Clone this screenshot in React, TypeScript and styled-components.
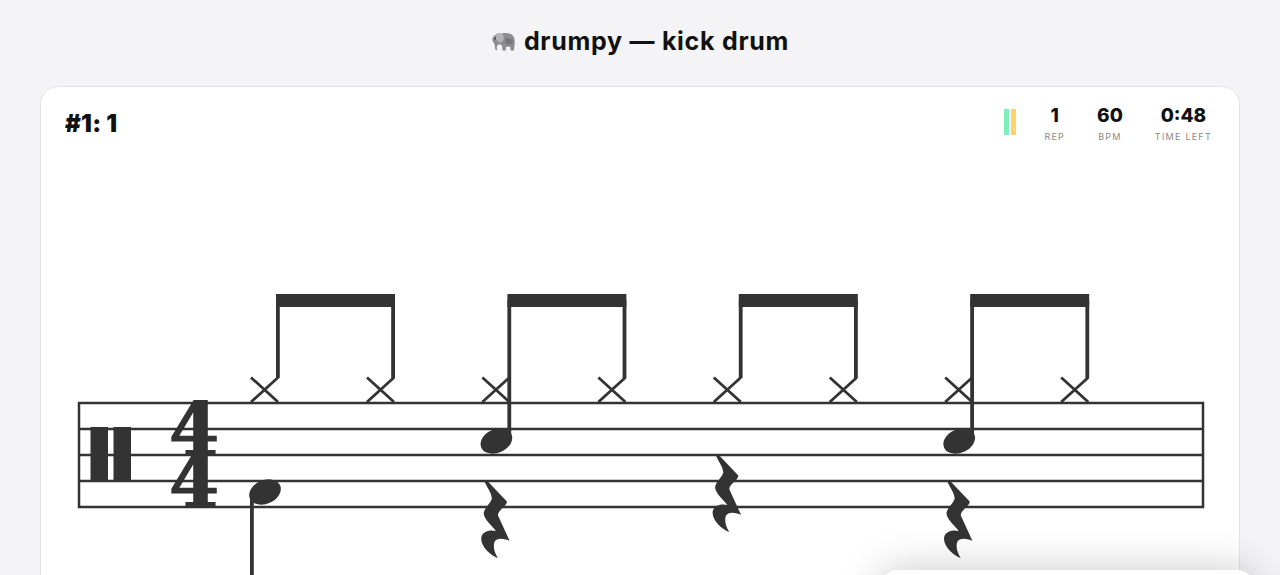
import styled, { createGlobalStyle } from "styled-components";

const GlobalStyle = createGlobalStyle`
  html, body {
    margin: 0;
    height: 575px;
    overflow: hidden;
    background: #f4f4f6;
    font-family: Inter, "Liberation Sans", sans-serif;
    color: #111111;
  }
`;

const INK = "#333333";
const STEP = 231.4;
const REST =
  "M0 0L3 0L22.500 20.500C23 25 13.500 29 13.500 34.300L25.300 60C21 58 12.500 56 10 61C8.500 66 10 72 13.500 77C7 75 -3.200 66 -3.200 58C-3.200 50 6 48.500 11.500 50C8 45 -1 38 -0.700 32C0 27 6.500 22 7.500 17.500C7 11 2 6 0 0Z";

interface BeatData {
  snare?: boolean;
  kick?: boolean;
  restY?: number;
}

const beats: BeatData[] = [
  { kick: true },
  { snare: true, restY: 481 },
  { restY: 455 },
  { snare: true, restY: 481 },
];

const stats = [
  { value: "1", label: "REP" },
  { value: "60", label: "BPM" },
  { value: "0:48", label: "TIME LEFT" },
];

const Cross = ({ x }: { x: number }) => (
  <path
    d={`M${x} 377.500L${x + 27} 402M${x + 27} 377.500L${x} 402`}
    stroke={INK}
    strokeWidth={2.8}
    fill="none"
  />
);

const Head = ({ cx, cy }: { cx: number; cy: number }) => (
  <ellipse
    cx={cx}
    cy={cy}
    rx={16.5}
    ry={11.8}
    transform={`rotate(-24 ${cx} ${cy})`}
    fill={INK}
  />
);

const Beat = ({ index, beat }: { index: number; beat: BeatData }) => {
  const dx = index * STEP;
  return (
    <g transform={`translate(${dx} 0)`}>
      <Cross x={251} />
      <Cross x={367} />
      <rect x={276} y={294} width={119} height={13} fill={INK} />
      <rect
        x={276}
        y={300}
        width={3.8}
        height={beat.snare ? 141 : 78}
        fill={INK}
      />
      <rect x={391.2} y={300} width={3.8} height={78} fill={INK} />
      {beat.snare && <Head cx={265} cy={441} />}
      {beat.kick && (
        <>
          <Head cx={265} cy={492} />
          <rect x={250} y={492} width={3.8} height={90} fill={INK} />
        </>
      )}
      {beat.restY !== undefined && (
        <path
          d={REST}
          transform={`translate(253 ${beat.restY})`}
          fill={INK}
        />
      )}
    </g>
  );
};

const Elephant = () => (
  <svg width="25" height="21" viewBox="0 0 25 22">
    <path
      d="M8 4C11 1.500 19 1.500 22 4.500C24.500 7 24.500 12 24 15L23.500 20.500L20 20.500L19.500 16.500L15 16.500L15 20.500L11.500 20.500L11 15.500L8.500 14C7 14 5.800 15 5.500 17C5.300 18.500 5.500 19.500 6.500 20C4.500 20.500 3.300 19 3.500 16.500C3.700 13.500 2 12.500 1 10.500C0 7.500 3 2.500 8 4Z"
      fill="#8c8c90"
    />
    <path
      d="M5 3C7.500 1.500 11.500 2 12.500 5C13.500 8 12 11.500 9.500 12C7.500 12 5.500 10 4.500 7.500Z"
      fill="#b4b4b8"
    />
    <path d="M14 8C17 7 20 7.500 22 9.500L22 14L15 14Z" fill="#77777b" />
    <circle cx="3.800" cy="8" r="0.8" fill="#222222" />
  </svg>
);

const App = () => {
  return (
    <Page>
      <GlobalStyle />
      <Title>
        <Elephant />
        <span>drumpy — kick drum</span>
      </Title>
      <Card>
        <CardHeader>
          <ExerciseName>#1: 1</ExerciseName>
          <StatsRow>
            <Bars>
              <Bar color="#7af0b6" />
              <Bar color="#ffd368" />
            </Bars>
            {stats.map((stat) => (
              <Stat key={stat.label}>
                <StatValue>{stat.value}</StatValue>
                <StatLabel>{stat.label}</StatLabel>
              </Stat>
            ))}
          </StatsRow>
        </CardHeader>
        <Score viewBox="41 152 1198 423">
          {[403, 429, 455, 481, 507].map((y) => (
            <line
              key={y}
              x1={78}
              x2={1204}
              y1={y}
              y2={y}
              stroke={INK}
              strokeWidth={2.5}
            />
          ))}
          <line x1={79} x2={79} y1={402} y2={508} stroke={INK} strokeWidth={2.5} />
          <line x1={1203} x2={1203} y1={402} y2={508} stroke={INK} strokeWidth={2.5} />
          <rect x={90.5} y={427} width={17.5} height={54} fill={INK} />
          <rect x={113.5} y={427} width={17.5} height={54} fill={INK} />
          <TimeDigits transform="translate(194 0)">
            <tspan x={0} y={455}>4</tspan>
            <tspan x={0} y={507}>4</tspan>
          </TimeDigits>
          {beats.map((beat, i) => (
            <Beat key={i} index={i} beat={beat} />
          ))}
        </Score>
      </Card>
      <Popup />
    </Page>
  );
};

export default App;

const Page = styled.div`
  display: flex;
  flex-direction: column;
  padding: 0 40px;
  height: 575px;
  overflow: hidden;
`;

const Title = styled.h1`
  display: flex;
  align-items: center;
  justify-content: center;
  gap: 8px;
  height: 86px;
  margin: 0;
  padding-bottom: 4px;
  box-sizing: border-box;
  font-size: 25px;
  font-weight: 700;
  letter-spacing: 0.72px;
  color: #111111;
  flex: none;
`;

const Card = styled.div`
  flex: none;
  height: 640px;
  background: #ffffff;
  border: 1px solid #e3e3e5;
  border-radius: 18px;
  box-sizing: border-box;
`;

const CardHeader = styled.div`
  display: flex;
  justify-content: space-between;
  align-items: flex-start;
  height: 65px;
  padding: 17px 27px 0 24px;
  box-sizing: border-box;
`;

const ExerciseName = styled.div`
  font-size: 24px;
  font-weight: 900;
  line-height: 40px;
  letter-spacing: 0.2px;
  color: #111111;
`;

const StatsRow = styled.div`
  display: flex;
  align-items: flex-start;
  gap: 32px;
`;

const Bars = styled.div`
  display: flex;
  gap: 2px;
  margin-top: 5px;
  margin-right: -4px;
`;

const Bar = styled.div<{ color: string }>`
  width: 5px;
  height: 26px;
  background: ${(props) => props.color};
`;

const Stat = styled.div`
  display: flex;
  flex-direction: column;
  align-items: center;
`;

const StatValue = styled.div`
  font-size: 19px;
  font-weight: 800;
  line-height: 24px;
  color: #111111;
`;

const StatLabel = styled.div`
  margin-top: 3px;
  font-size: 9px;
  line-height: 12px;
  letter-spacing: 1.25px;
  color: #8a8a8a;
`;

const Score = styled.svg`
  display: block;
  width: 1198px;
  height: 423px;
`;

const TimeDigits = styled.text`
  font-family: "DejaVu Serif", serif;
  font-size: 72px;
  font-weight: 700;
  text-anchor: middle;
  fill: #333333;
  stroke: #333333;
  stroke-width: 1.2px;
`;

const Popup = styled.div`
  position: fixed;
  left: 880px;
  top: 570px;
  width: 375px;
  height: 120px;
  background: #ffffff;
  border-radius: 18px;
  box-shadow: 0 0 42px rgba(0, 0, 0, 0.22);
`;
